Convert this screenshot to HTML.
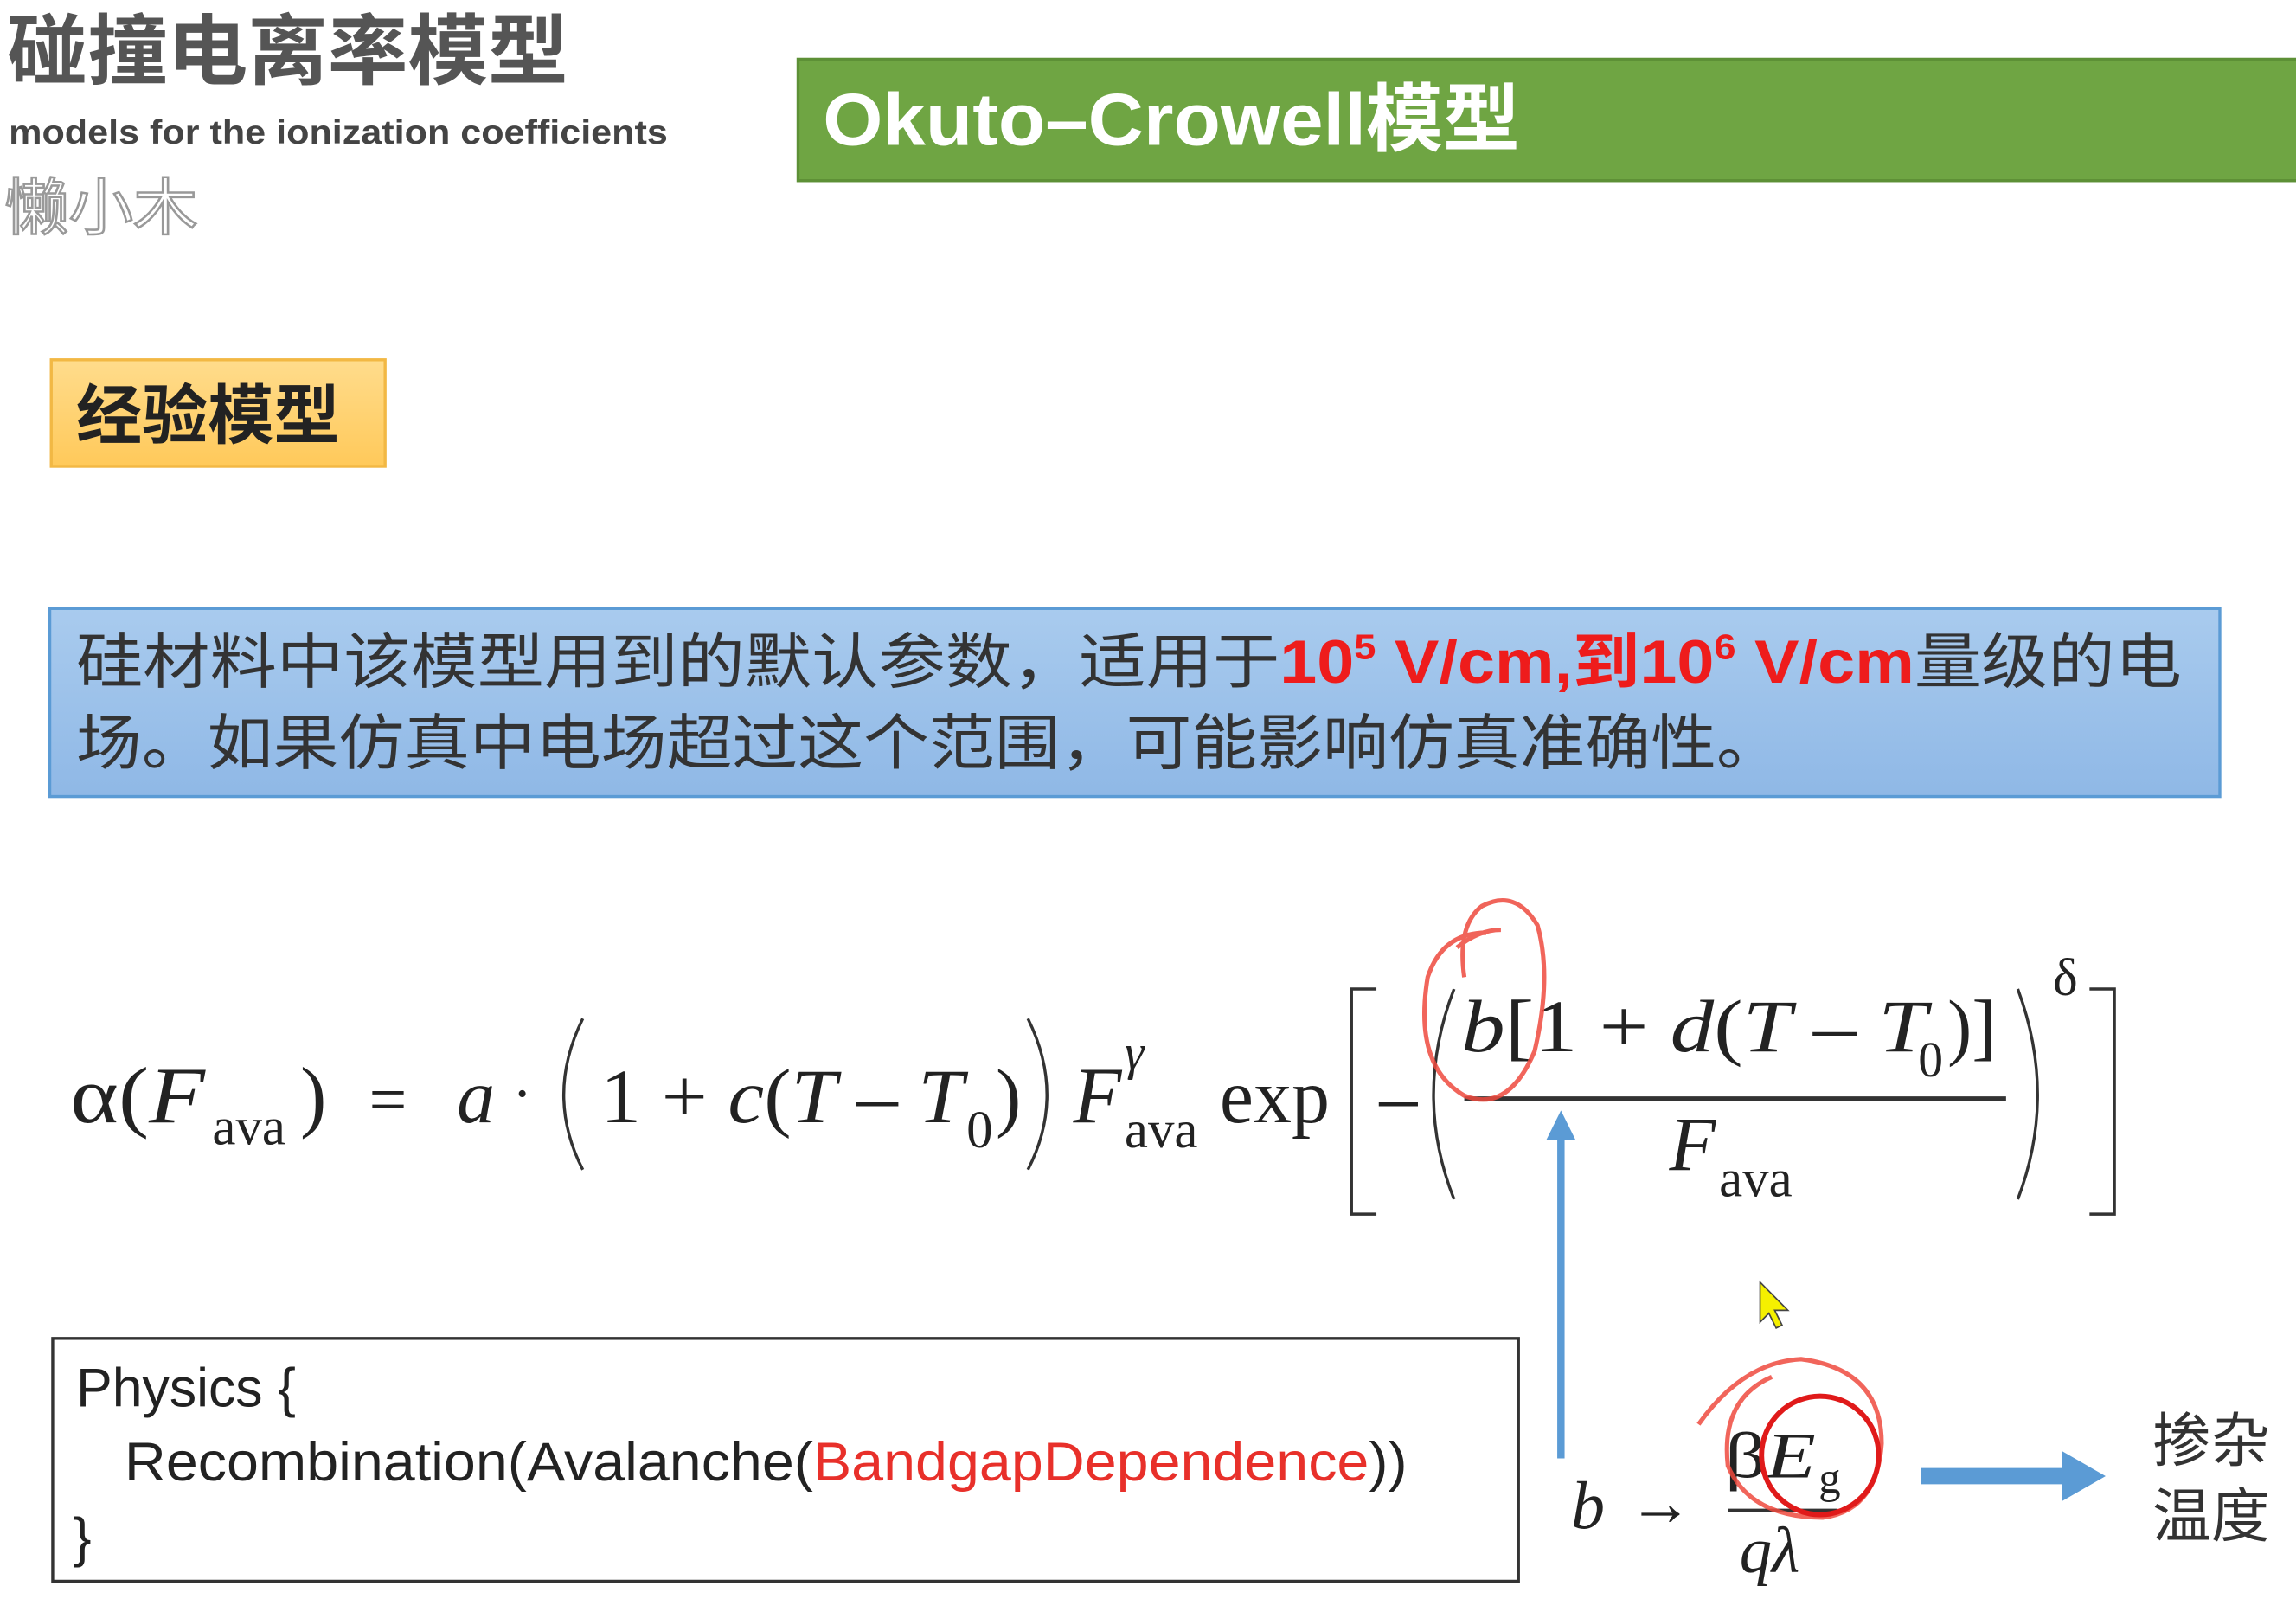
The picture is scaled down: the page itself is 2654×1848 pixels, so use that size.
<!DOCTYPE html>
<html><head><meta charset="utf-8"><style>
html,body{margin:0;padding:0;background:#fff;overflow:hidden}
svg{display:block}
.cjk{font-family:"Liberation Sans","Noto Sans CJK SC",sans-serif}
.m{font-family:"Liberation Serif","DejaVu Serif",serif;fill:#222}
.i{font-style:italic}
</style></head><body>
<svg width="2654" height="1848" viewBox="0 0 1568 1080" preserveAspectRatio="none" xmlns="http://www.w3.org/2000/svg">
<defs>
<linearGradient id="yg" x1="0" y1="0" x2="0" y2="1"><stop offset="0" stop-color="#ffdc8c"/><stop offset="1" stop-color="#ffc95a"/></linearGradient>
<linearGradient id="bg" x1="0" y1="0" x2="0" y2="1"><stop offset="0" stop-color="#a9cbee"/><stop offset="1" stop-color="#8fb8e6"/></linearGradient>
</defs>
<rect width="1568" height="1080" fill="#fff"/>
<text x="5" y="53" class="cjk" font-size="52" font-weight="bold" fill="#555" textLength="383" lengthAdjust="spacingAndGlyphs">碰撞电离率模型</text>
<text x="6" y="97" class="cjk" font-size="23" font-weight="bold" fill="#444" textLength="450" lengthAdjust="spacingAndGlyphs">models for the ionization coefficients</text>
<text x="3" y="155" class="cjk" font-size="42" fill="#fff" stroke="#999" stroke-width="1.5" textLength="132" lengthAdjust="spacingAndGlyphs">懒小木</text>
<rect x="545" y="40" width="1030" height="82" fill="#6fa543" stroke="#5d9036" stroke-width="2"/>
<text x="562" y="98" class="cjk" font-size="50" font-weight="bold" fill="#fff" textLength="476" lengthAdjust="spacingAndGlyphs">Okuto–Crowell模型</text>
<rect x="35" y="243" width="228" height="72" fill="url(#yg)" stroke="#f2b844" stroke-width="2"/>
<text x="52" y="296" class="cjk" font-size="44" font-weight="bold" fill="#222" textLength="180" lengthAdjust="spacingAndGlyphs">经验模型</text>
<rect x="34" y="411" width="1482" height="127" fill="url(#bg)" stroke="#5b9bd5" stroke-width="2"/>
<text x="52" y="461" class="cjk" font-size="41" fill="#333" textLength="1438" lengthAdjust="spacingAndGlyphs">硅材料中该模型用到的默认参数，适用于<tspan fill="#ee1c1c" font-weight="bold">10<tspan font-size="24" dy="-16">5</tspan><tspan dy="16"> V/cm,到10</tspan><tspan font-size="24" dy="-16">6</tspan><tspan dy="16"> V/cm</tspan></tspan>量级的电</text>
<text x="52" y="516" class="cjk" font-size="41" fill="#333" textLength="1165" lengthAdjust="spacingAndGlyphs">场。如果仿真中电场超过这个范围，可能影响仿真准确性。</text>
<g class="m">
<text x="48" y="758" font-size="54" textLength="92" lengthAdjust="spacingAndGlyphs">α(<tspan class="i">F</tspan></text>
<text x="145" y="773" font-size="36">ava</text>
<text x="205" y="758" font-size="54">)</text>
<text x="252" y="758" font-size="46">=</text>
<text x="312" y="758" font-size="52" class="i">a</text>
<text x="350" y="752" font-size="40">·</text>
<text x="410" y="758" font-size="52" textLength="248" lengthAdjust="spacingAndGlyphs">1 + <tspan class="i">c</tspan>(<tspan class="i">T</tspan> – <tspan class="i">T</tspan></text>
<text x="660" y="775" font-size="36">0</text>
<text x="680" y="758" font-size="52">)</text>
<text x="733" y="758" font-size="54" class="i">F</text>
<text x="768" y="722" font-size="34" class="i">γ</text>
<text x="768" y="775" font-size="36">ava</text>
<text x="833" y="758" font-size="52">exp</text>
<text x="942" y="758" font-size="52">–</text>
<text x="998" y="710" font-size="50" textLength="318" lengthAdjust="spacingAndGlyphs"><tspan class="i">b</tspan>[1 + <tspan class="i">d</tspan>(<tspan class="i">T</tspan> – <tspan class="i">T</tspan></text>
<text x="1310" y="727" font-size="34">0</text>
<text x="1330" y="710" font-size="50">)]</text>
<text x="1140" y="790" font-size="52" class="i">F</text>
<text x="1174" y="808" font-size="36">ava</text>
<text x="1402" y="672" font-size="36">δ</text>
<text x="1073" y="1032" font-size="46" class="i">b</text>
<text x="1112" y="1030" font-size="44">→</text>
<text x="1178" y="998" font-size="44" textLength="62" lengthAdjust="spacingAndGlyphs">β<tspan class="i">E</tspan></text>
<text x="1242" y="1008" font-size="30">g</text>
<text x="1188" y="1062" font-size="44" class="i">qλ</text>
</g>
<g fill="none" stroke="#333" stroke-width="2">
<path d="M398 688 Q372 740 398 790"/>
<path d="M702 688 Q728 740 702 790"/>
<path d="M940 668 H923 V820 H940"/>
<path d="M993 668 Q965 740 993 810"/>
<path d="M1378 668 Q1405 740 1378 810"/>
<path d="M1427 668 H1444 V820 H1427"/>
<path d="M1000 742 H1370" stroke-width="3"/>
<path d="M1180 1020 H1255"/>
</g>
<path d="M1066 985 V765" stroke="#5b9bd5" stroke-width="5"/>
<path d="M1056 770 L1066 750 L1076 770 Z" fill="#5b9bd5"/>
<path d="M1312 997 H1410" stroke="#5b9bd5" stroke-width="11"/>
<path d="M1408 980 L1438 997 L1408 1014 Z" fill="#5b9bd5"/>
<text x="1470" y="987" class="cjk" font-size="40" fill="#333">掺杂</text>
<text x="1470" y="1038" class="cjk" font-size="40" fill="#333">温度</text>
<g fill="none" stroke="#ee4a3e" stroke-width="3" opacity="0.85">
<path d="M1015 630 Q985 630 975 660 Q965 720 1000 740 Q1030 752 1048 710 Q1060 660 1050 625 Q1035 600 1012 612 Q995 625 1000 660"/>
<path d="M1025 628 Q1010 628 995 640"/>
<path d="M1160 962 Q1190 920 1230 918 Q1285 925 1285 975 Q1282 1020 1245 1025 Q1195 1025 1180 990 Q1175 945 1210 930"/>
</g>
<ellipse cx="1243" cy="983" rx="40" ry="40" fill="none" stroke="#e01a1a" stroke-width="3.5"/>
<path d="M1202 866 L1202 893 L1208 887 L1213 897 L1217 895 L1212 885 L1221 885 Z" fill="#f5f000" stroke="#444" stroke-width="1"/>
<rect x="36" y="904" width="1001" height="164" fill="#fff" stroke="#333" stroke-width="2"/>
<g class="cjk" font-size="37" fill="#222">
<text x="52" y="950" textLength="150" lengthAdjust="spacingAndGlyphs">Physics {</text>
<text x="85" y="1000" textLength="876" lengthAdjust="spacingAndGlyphs">Recombination(Avalanche(<tspan fill="#e8302a">BandgapDependence</tspan>))</text>
<text x="50" y="1051">}</text>
</g>
</svg>
</body></html>
